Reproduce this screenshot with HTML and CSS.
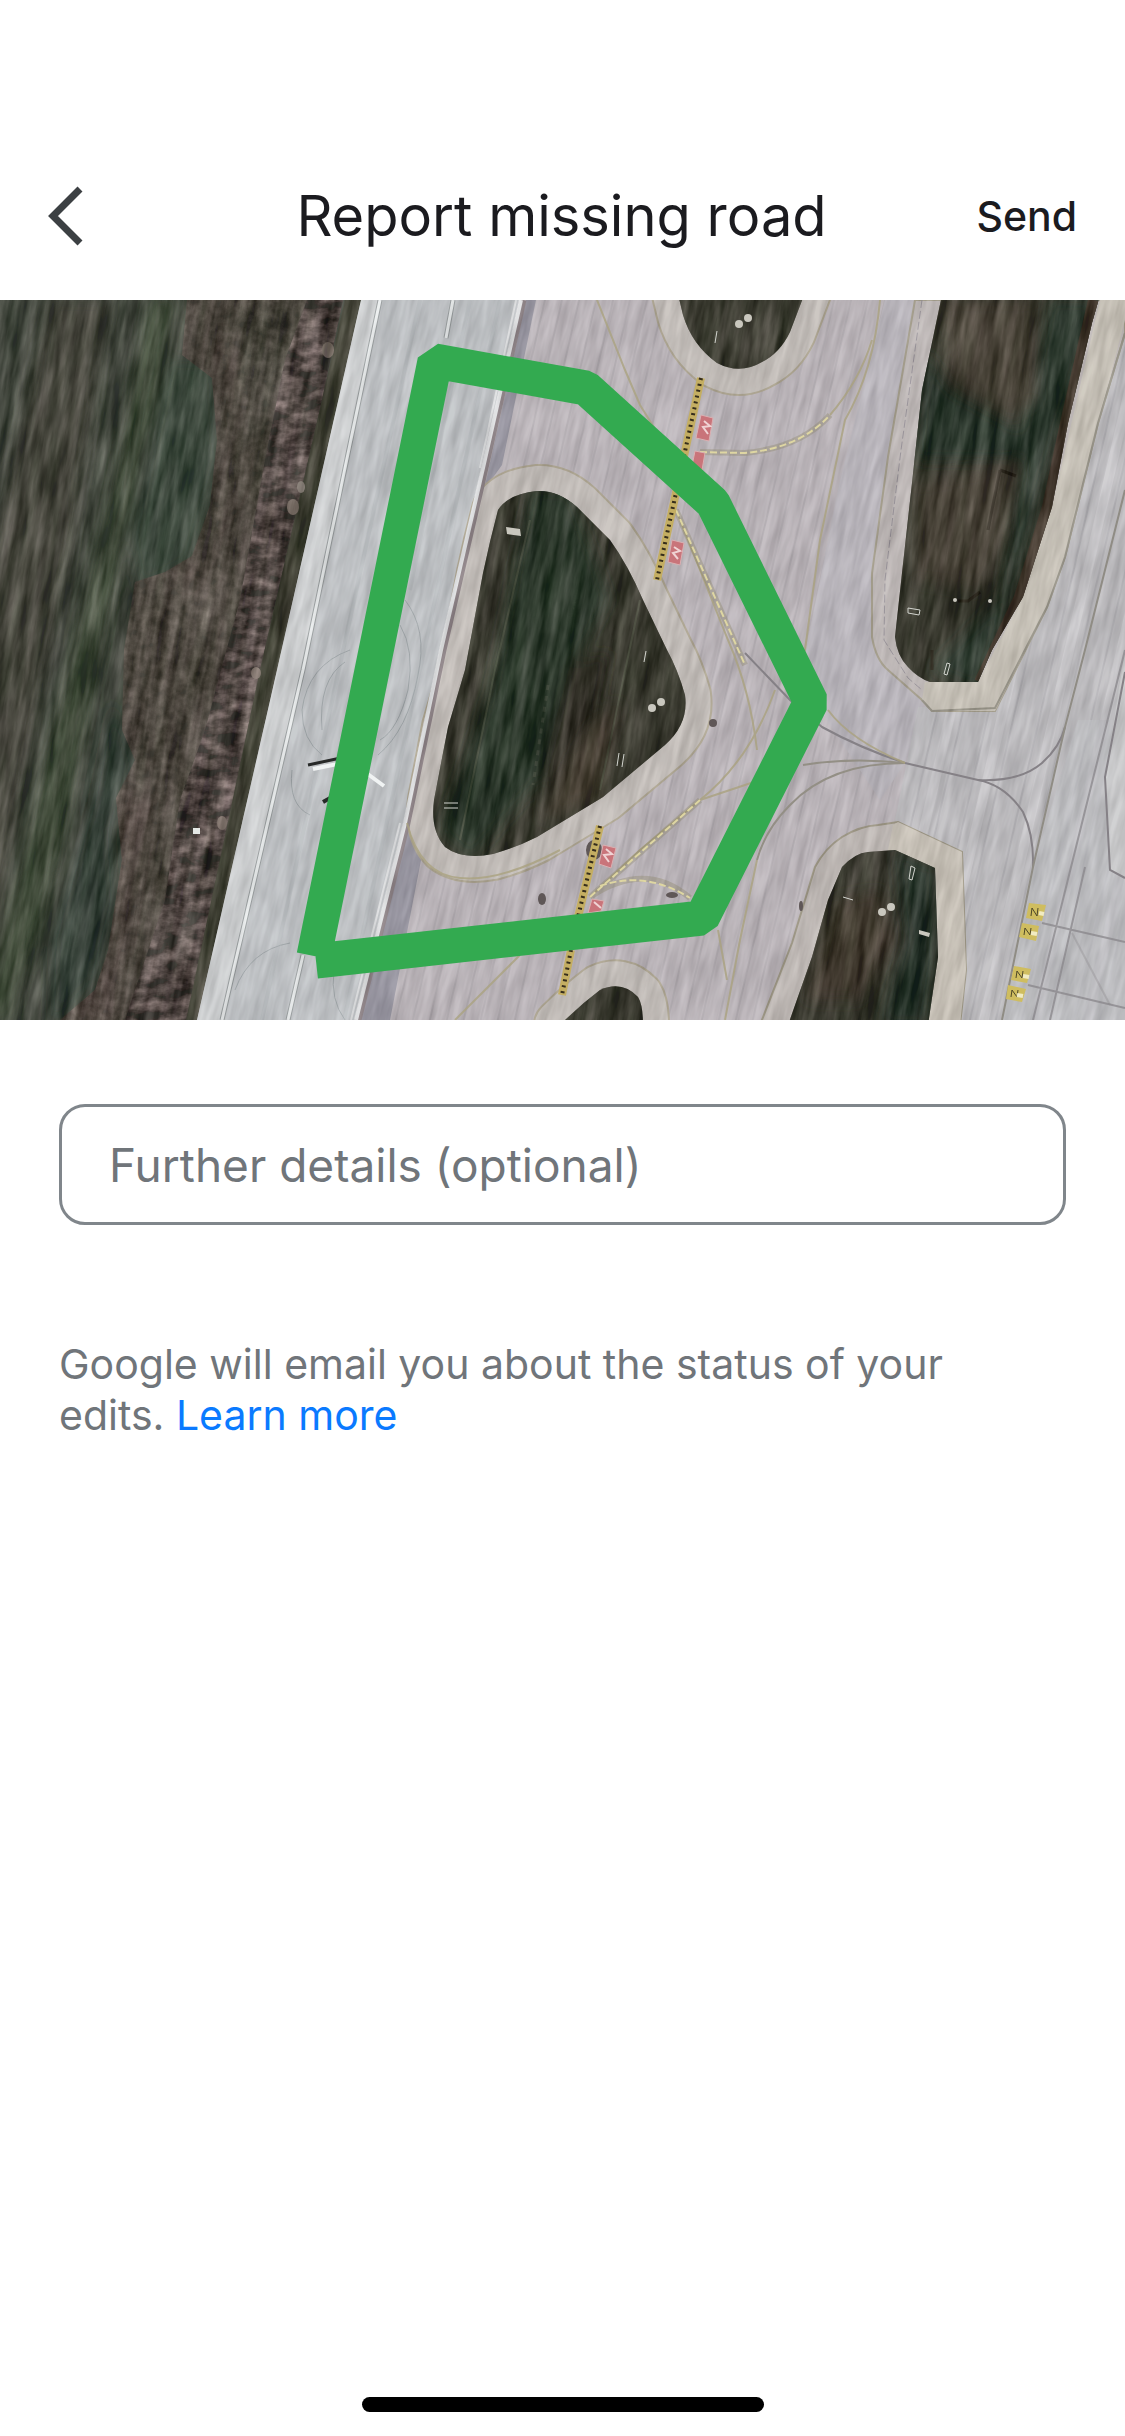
FILE: index.html
```
<!DOCTYPE html>
<html lang="en">

<head>
    <meta charset="UTF-8">
    <meta name="viewport" content="width=device-width, initial-scale=1">
    <title>Report missing road</title>
    <link rel="stylesheet" href="styles.css">
</head>

<body>
    <header class="topbar">
        <button class="back" type="button" aria-label="Back">
            <svg width="40" height="60" viewBox="0 0 40 60"><path d="M34 3 L7 30 L34 57" /></svg>
        </button>
        <h1>Report missing road</h1>
        <button class="send" type="submit" form="reportForm">Send</button>
    </header>

    <svg class="map" viewBox="0 0 1125 720" role="img" aria-label="Satellite map with the drawn road">
        <defs>
            <filter id="grassNoise" x="0" y="0" width="100%" height="100%" color-interpolation-filters="sRGB">
                <feTurbulence type="fractalNoise" baseFrequency="0.1 0.015" numOctaves="4" seed="4" />
                <feColorMatrix values="0.9 0 0 0 -0.22  0.85 0.05 0 0 -0.22  0.85 0 0 0 -0.24  0 0 0 0 0.45" />
            </filter>
            <filter id="treeNoise" x="0" y="0" width="100%" height="100%" color-interpolation-filters="sRGB">
                <feTurbulence type="fractalNoise" baseFrequency="0.05 0.09" numOctaves="4" seed="9" />
                <feColorMatrix values="1.9 0 0 0 -0.64  1.7 0 0 0 -0.63  1.7 0 0 0 -0.62  0 0 0 0 0.75" />
            </filter>
            <filter id="scrubNoise" x="0" y="0" width="100%" height="100%" color-interpolation-filters="sRGB">
                <feTurbulence type="fractalNoise" baseFrequency="0.1" numOctaves="4" seed="5" />
                <feColorMatrix values="1.2 0 0 0 -0.3  1.1 0 0 0 -0.31  1.1 0 0 0 -0.33  0 0 0 0 0.4" />
            </filter>
            <filter id="paveNoise" x="0" y="0" width="100%" height="100%" color-interpolation-filters="sRGB">
                <feTurbulence type="fractalNoise" baseFrequency="0.12 0.02" numOctaves="3" seed="2" />
                <feColorMatrix values="1 0 0 0 0.24  1 0 0 0 0.23  1 0 0 0 0.24  0 0 0 0 0.25" />
            </filter>
            <filter id="soft" x="-20%" y="-20%" width="140%" height="140%"><feGaussianBlur stdDeviation="7" /></filter>
            <pattern id="slabs" width="17" height="90" patternUnits="userSpaceOnUse" patternTransform="skewX(-13)">
                <path d="M1 0 V90" stroke="#8f8a91" stroke-width="1" opacity=".6" />
            </pattern>
            <pattern id="lanes" width="52" height="90" patternUnits="userSpaceOnUse" patternTransform="skewX(-13)">
                <path d="M6 0 V90" stroke="#cdcccf" stroke-width="10" opacity=".6" />
                <path d="M18 0 V90 M44 0 V90" stroke="#939297" stroke-width="1" opacity=".7" />
            </pattern>
            <path id="midIsland" d="M537 191 Q508 194 498 210 Q490 240 483 273 L465 370 L448 427 L434 500 Q430 530 445 547 Q462 560 493 554 Q515 548 537 537 L603 497 L665 445 Q689 424 685 395 Q678 370 667 350 L643 300 Q628 265 610 240 L577 207 Q558 190 537 191 Z" />
            <path id="topIsland" d="M677 -10 L683 15 Q692 45 717 63 Q740 75 762 62 Q780 53 790 32 L806 -10 Z" />
            <path id="lowIsland" d="M560 725 Q580 705 600 690 Q622 680 638 697 Q643 705 643 725 Z" />
            <path id="eastIsland" d="M942 -5 L922 90 L912 183 L902 273 L895 337 Q897 356 908 367 Q918 378 930 382 H978 L992 350 L1023 297 L1052 207 L1068 123 L1092 23 L1100 -5 Z" />
            <path id="southIsland" d="M788 725 L812 657 L828 600 L842 567 Q855 553 868 552 L895 550 L935 568 L938 657 L928 725 Z" />
            <clipPath id="grassClip">
                <path d="M0 0 H361 L277 370 L197 720 H0 Z" />
                <use href="#midIsland" />
                <use href="#topIsland" />
                <use href="#lowIsland" />
                <use href="#eastIsland" />
                <use href="#southIsland" />
            </clipPath>
            <clipPath id="scrubClip"><path d="M187 0 L182 55 L212 78 L217 140 L210 205 L192 256 L165 272 L135 282 L124 350 L122 430 L135 460 L116 498 L122 560 L108 650 L95 690 L60 720 H188 L260 370 L343 0 Z" /></clipPath>
            <clipPath id="treeClip"><path d="M307 0 L343 0 L322 100 L260 370 L188 720 L125 720 L165 600 L180 500 L205 430 L240 300 L265 160 L285 60 Z" /></clipPath>
            <clipPath id="midClip"><use href="#midIsland" /></clipPath>
            <clipPath id="eastClip"><use href="#eastIsland" /></clipPath>
            <clipPath id="southClip"><use href="#southIsland" /></clipPath>
        </defs>

        <!-- pavement -->
        <rect width="1125" height="720" fill="#b8b1b6" />
        <rect width="1125" height="720" fill="url(#slabs)" />
        <path d="M885 0 L840 180 L800 380 L880 500 L905 463 L925 400 L880 330 L888 157 L915 0 Z" fill="#b6b2b9" />
        <path d="M1125 20 L1098 123 L1065 257 L1047 307 L995 408 L918 407 L895 520 L960 552 L966 670 L958 720 H1125 Z" fill="#b9b8bb" />
        <path d="M1125 20 L1098 123 L1065 257 L1047 307 L995 408 L918 407 L895 520 L960 552 L966 670 L958 720 H1125 Z" fill="url(#lanes)" />
        <path d="M1078 420 L1033 567 L1002 720 H1125 V420 Z" fill="#bbbdc0" opacity=".8" />
        <path d="M1125 350 L1105 477 L1110 570 L1125 578 Z" fill="#c6c7c8" />

        <!-- field on the left -->
        <path d="M0 0 H361 L277 370 L197 720 H0 Z" fill="#2f3a30" />
        <g filter="url(#soft)" clip-path="url(#grassClip)">
            <path d="M50 0 H110 L70 250 L20 500 L-20 720 V300 Z" fill="#38392f" />
            <path d="M150 0 H178 L110 300 L60 560 L10 720 H-20 L40 480 L110 200 Z" fill="#2b4228" />
            <path d="M170 60 H215 L220 160 L190 260 L140 290 L130 240 Z" fill="#213c2f" />
            <path d="M112 400 L135 465 L112 530 L115 600 L95 680 L50 730 L52 640 L92 500 Z" fill="#192f25" />
        </g>
        <g clip-path="url(#scrubClip)">
            <rect width="361" height="720" fill="#463c34" />
            <g filter="url(#soft)">
                <path d="M240 10 L300 0 L270 130 L240 150 Z" fill="#3a3a2e" />
                <path d="M212 50 L235 100 L240 150 L210 250 L170 275 L190 285 L240 180 L240 90 L222 30 Z" fill="#553e3a" />
                <path d="M120 490 L150 500 L130 600 L110 720 L60 720 L110 660 Z" fill="#533938" />
            </g>
            <rect width="361" height="720" filter="url(#scrubNoise)" />
        </g>
        <g clip-path="url(#treeClip)">
            <rect width="361" height="720" fill="#4b3b3d" />
            <rect width="361" height="720" filter="url(#treeNoise)" />
        </g>
        <path d="M345 0 H361 L277 370 L197 720 H186 L260 370 Z" fill="#2f3020" />
        <g fill="#a58d86">
            <ellipse cx="328" cy="50" rx="6" ry="8" />
            <ellipse cx="301" cy="187" rx="4" ry="6" fill="#baa8a3" />
            <ellipse cx="293" cy="207" rx="6" ry="8" />
            <ellipse cx="256" cy="373" rx="5" ry="6" />
            <ellipse cx="222" cy="523" rx="5" ry="7" />
        </g>

        <!-- runway -->
        <path d="M361 0 H523 L480 190 L443 350 L407 523 L358 720 H197 L277 370 Z" fill="#bcc0c3" />
        <path d="M361 0 H379 L303 370 L222 720 H197 L277 370 Z" fill="#cfd2d3" />
        <g fill="none" stroke="#a2a8ab" stroke-width="4" opacity=".35">
            <path d="M420 0 L262 720 M470 0 L438 150 L410 290 M500 0 L344 720" />
        </g>
        <g fill="none" stroke="#979fa2" stroke-width="1">
            <path d="M350 350 Q308 365 302 410 Q302 440 322 455 M345 362 Q318 380 322 430 M292 470 Q288 505 310 515 M405 300 Q428 330 418 375 Q408 430 378 455 M400 325 Q415 350 408 390 Q398 430 380 440 M235 690 Q250 650 290 643 M334 670 Q330 700 345 720" />
        </g>
        <path d="M380 0 L303 370 L222 720 M453 0 L446 38 M303 655 L288 720" fill="none" stroke="#8d9394" stroke-width="5" />
        <path d="M380 0 L303 370 L222 720 M453 0 L446 38 M303 655 L288 720" fill="none" stroke="#e8ecec" stroke-width="3" />
        <path d="M526 0 H536 L502 165 L484 190 Z M407 523 L422 555 L390 720 H360 Z" fill="#8b8996" />

        <!-- light shoulders round the grass -->
        <g fill="none" stroke-linejoin="round">
            <g stroke="#a59c84" stroke-width="54">
                <use href="#midIsland" /><use href="#topIsland" /><use href="#lowIsland" />
            </g>
            <g stroke="#c0bab4" stroke-width="50">
                <use href="#midIsland" /><use href="#topIsland" /><use href="#lowIsland" />
            </g>
        </g>
        <path d="M523 0 L480 190 L443 350 L407 523 L358 720" fill="none" stroke="#807478" stroke-width="7" />
        <path d="M521 0 L478 190 L441 350 L405 523 L356 720" fill="none" stroke="#e0e2e3" stroke-width="4" />
        <path d="M516 0 L480 168 M400 523 L351 720" fill="none" stroke="#e0e2e3" stroke-width="2" />
        <path d="M915 0 L888 157 L872 273 L872 337 Q876 360 888 370 L922 400 L932 411 H995 L1047 307 L1065 257 L1098 123 L1125 33 V0 Z" fill="#bcb5b3" stroke="#9d9680" stroke-width="2" />
        <path d="M1100 0 L1052 207 L1023 297 L978 382 H925 L922 400 L932 411 H995 L1047 307 L1065 257 L1098 123 L1125 20 V0 Z" fill="#c6c0b3" />
        <path d="M922 400 L932 411 L995 408 L1047 307 L1065 257 L1098 123 L1125 33" fill="none" stroke="#8c887a" stroke-width="2" />
        <path d="M760 725 L792 643 L815 567 Q825 548 842 537 Q860 526 878 525 L898 522 L962 552 L966 670 L960 725 Z" fill="#bcb5b0" stroke="#938c76" stroke-width="2" />
        <path d="M893 525 L898 522 L962 552 L966 670 L960 725 H928 L938 657 L935 568 L888 550 Z" fill="#c6bfb2" />
        <path d="M922 0 L901 150 L885 280 L884 340 L908 378 L922 390" fill="none" stroke="#8f8990" stroke-width="1" stroke-dasharray="8 3" />
        <g transform="skewX(-13)">
            <rect width="1300" height="720" filter="url(#paveNoise)" opacity=".8" />
        </g>

        <!-- grass islands -->
        <g fill="#3a3a31">
            <use href="#midIsland" /><use href="#topIsland" /><use href="#lowIsland" /><use href="#eastIsland" /><use href="#southIsland" />
        </g>
        <g clip-path="url(#midClip)">
            <g filter="url(#soft)">
                <path d="M530 190 H570 L610 300 L570 370 L540 480 L470 560 L440 530 L490 390 Z" fill="#22372b" />
                <path d="M570 365 L610 350 L590 450 L560 490 L540 480 Z" fill="#28231d" />
                <path d="M590 430 L620 400 L600 500 L540 520 Z" fill="#57493e" />
            </g>
            <path d="M530 220 L495 370 L460 540 M640 300 L600 490" fill="none" stroke="#68715c" stroke-width="2" opacity=".6" />
            <path d="M548 385 L533 485" fill="none" stroke="#747969" stroke-width="3" stroke-dasharray="5 6" opacity=".4" />
        </g>
        <g clip-path="url(#eastClip)">
            <path d="M925 50 L950 90 L1020 130 L1050 0 H1100 L1050 160 L1010 300 L980 390 L930 370 L1000 300 L1020 160 L915 160 Z" fill="#20392e" filter="url(#soft)" />
            <path d="M940 0 H1035 V100 L1010 115 L950 80 Z M915 185 L1020 160 L1005 240 L980 290 L915 280 Z" fill="#51473c" filter="url(#soft)" />
            <path d="M1094 0 L1066 123 L1048 207 L1020 297 L980 382" fill="none" stroke="#4c3930" stroke-width="12" />
            <path d="M1000 170 L988 230 M1000 170 L1016 176 M958 301 H968 L980 292 M932 350 V370" fill="none" stroke="#282018" stroke-width="3" />
        </g>
        <g clip-path="url(#southClip)">
            <path d="M895 550 L935 568 V657 L925 725 H880 L905 640 Z" fill="#1f332b" filter="url(#soft)" />
            <path d="M835 600 L880 590 L895 640 L860 700 L805 700 Z" fill="#45382f" filter="url(#soft)" />
        </g>
        <g clip-path="url(#grassClip)">
            <g transform="skewX(-9)">
                <rect width="1300" height="720" filter="url(#grassNoise)" />
            </g>
        </g>

        <!-- small fixtures on the grass -->
        <rect x="193" y="528" width="7" height="6" fill="#e4e8e5" />
        <g fill="none" stroke="#d3d5cf" stroke-width="1">
            <path d="M717 31 L715 43 M646 351 L644 362 M619 453 L617 466 M624 454 L622 467 M444 503 H458 M444 508 H458" />
            <path d="M947 363 L950 364 L947 375 L944 374 Z M908 308 L920 310 L919 315 L908 313 Z M911 566 L915 568 L912 580 L909 579 Z M843 597 L853 600" />
        </g>
        <g fill="#c9c7be">
            <path d="M506 227 L520 229 L521 236 L507 234 Z M919 630 L930 633 L929 637 L919 634 Z" />
            <circle cx="661" cy="402" r="4" /><circle cx="652" cy="408" r="4" />
            <circle cx="739" cy="24" r="4" /><circle cx="748" cy="18" r="4" />
            <circle cx="891" cy="607" r="4" /><circle cx="882" cy="612" r="4" />
            <circle cx="955" cy="300" r="2" /><circle cx="990" cy="301" r="2" />
        </g>
        <g fill="#5f5757">
            <circle cx="713" cy="423" r="4" /><ellipse cx="542" cy="599" rx="4" ry="6" /><ellipse cx="672" cy="595" rx="6" ry="3" />
            <ellipse cx="801" cy="606" rx="2" ry="5" /><ellipse cx="594" cy="550" rx="8" ry="10" />
        </g>

        <!-- taxiway centre lines -->
        <g fill="none" stroke="#858186" stroke-width="2">
            <path d="M745 353 L790 400 L822 427 Q860 448 905 463 L978 480 Q1005 485 1023 512 Q1034 535 1033 567" />
            <path d="M978 480 Q1020 482 1042 463 Q1060 447 1065 427" />
            <path d="M1125 190 L1085 350 L1065 427 L1033 567 L1002 720" stroke="#8f8c84" />
            <path d="M1125 350 L1033 720 M1085 567 L1050 720 M1042 623 L1125 642 M1028 685 L1125 708" opacity=".7" />
            <path d="M1125 372 L1105 477 L1110 570 L1125 578" />
            <path d="M1072 633 L1110 705" opacity=".3" />
            <path d="M803 465 Q850 457 905 463 M905 463 Q830 463 790 505 Q765 530 757 560" stroke="#938f85" />
        </g>
        <g fill="none" stroke="#aaa27f" stroke-width="2" opacity=".8">
            <path d="M597 0 L625 70 L640 105 L668 150 M676 210 L700 270 L728 340 Q750 390 757 450" />
            <path d="M590 597 L640 550 L700 500 Q750 460 775 390 M700 500 L760 480 L790 465" />
            <path d="M880 0 Q874 70 845 120 L820 240 L805 350 L785 385 M828 410 Q850 440 905 463 M830 115 Q860 80 872 40" />
            <path d="M757 560 L740 640 L725 720 M718 630 L727 680 M520 655 L495 680 L455 720 M407 523 Q420 575 460 578 Q500 582 560 550" />
        </g>
        <g fill="none" stroke="#827a55" stroke-width="6" opacity=".3">
            <path d="M700 152 L745 153 Q800 148 830 115 M676 210 L745 365 M590 597 L700 500 M590 597 Q645 560 690 598" />
        </g>
        <g fill="none" stroke="#ded6a2" stroke-width="2" stroke-dasharray="7 3">
            <path d="M700 152 L745 153 Q800 148 830 115 M676 210 L745 365 M590 597 L700 500 M600 586 Q645 570 690 598" />
        </g>
        <g fill="none" stroke="#c4ae62" stroke-width="8">
            <path d="M701 78 L657 280 M600 526 L578 617 M571 650 L562 695" />
        </g>
        <g fill="none" stroke="#352d1c" stroke-width="4" stroke-dasharray="2 4">
            <path d="M701 78 L657 280 M600 526 L578 617 M571 650 L562 695" />
        </g>

        <!-- painted signs -->
        <g fill="#c9747a" stroke="#dab0b2" stroke-width="1">
            <path d="M701 115 L713 118 L709 141 L696 138 Z M695 151 L705 153 L702 170 L692 166 Z M672 240 L684 243 L680 265 L668 262 Z M603 545 L616 548 L611 568 L599 564 Z M592 599 L604 601 L601 611 L588 613 Z" />
        </g>
        <path d="M704 121 L710 126 L703 127 L708 134 M674 247 L680 251 L673 253 L678 259 M606 549 L612 554 L604 555 L609 562 M594 602 L601 608" fill="none" stroke="#f0d3d4" stroke-width="2" />
        <g fill="#cfbd5f">
            <path d="M1029 603 L1046 605 L1042 621 L1026 618 Z M1022 623 L1039 626 L1036 641 L1019 637 Z M1014 666 L1031 669 L1027 683 L1011 680 Z M1008 685 L1026 689 L1022 702 L1006 699 Z" />
        </g>
        <path d="M1031 616 L1032 608 L1037 616 L1038 608 M1024 635 L1025 628 L1030 635 L1031 628 M1016 678 L1017 671 L1022 678 L1023 671 M1011 697 L1012 690 L1017 697 L1018 690" fill="none" stroke="#4e4828" stroke-width="1" />
        <path d="M1039 613 L1044 614 M1031 633 L1037 634 M1023 676 L1029 677 M1017 695 L1023 696" stroke="#f1ebc2" stroke-width="4" />

        <!-- plane on the runway -->
        <path d="M308 465 L350 456" stroke="#272928" stroke-width="3" />
        <path d="M313 469 L352 461 M365 472 L384 486" stroke="#f0f3f3" stroke-width="4" />
        <path d="M323 502 L332 497" stroke="#272928" stroke-width="4" />

        <!-- road drawn by the user -->
        <polyline class="road" points="314,656 435,61 586,88 713,203 811,402 702,618 316,661" />
    </svg>

    <main class="content">
        <form id="reportForm">
            <input class="details" type="text" name="details" aria-label="Further details (optional)" placeholder="Further details (optional)">
        </form>
        <p class="notice">Google will email you about the status of your edits. <a href="#">Learn more</a></p>
    </main>

    <div class="home-bar"></div>
</body>

</html>
```
FILE: styles.css
```
* {
    margin: 0;
    padding: 0;
    box-sizing: border-box;
}

body {
    font-family: Inter, "Liberation Sans", sans-serif;
    background-color: #fff;
    color: #1b1b1f;
    display: flex;
    flex-direction: column;
    min-height: 100vh;
}

button {
    background: none;
    border: none;
    font-family: inherit;
    color: inherit;
    cursor: pointer;
}

.topbar {
    display: grid;
    grid-template-columns: 1fr auto 1fr;
    align-items: center;
    padding: 132px 48px 0 46px;
    height: 300px;
}

.topbar h1 {
    font-size: 56px;
    font-weight: 400;
    line-height: 72px;
}

.back {
    justify-self: start;
    display: flex;
}

.back path {
    fill: none;
    stroke: #3c4043;
    stroke-width: 7;
}

.send {
    justify-self: end;
    font-size: 41px;
    font-weight: 500;
    line-height: 52px;
}

/* Map preview */
.map {
    display: block;
    width: 100%;
    height: auto;
}

.road {
    fill: none;
    stroke: #33aa50;
    stroke-width: 35;
    stroke-linejoin: bevel;
}

.content {
    padding: 84px 59px 0;
}

.details {
    display: block;
    width: 100%;
    height: 121px;
    padding: 0 47px;
    border: 3px solid #80868b;
    border-radius: 26px;
    font-family: inherit;
    font-size: 46px;
    color: #1b1b1f;
}

.details::placeholder {
    color: #70757a;
    opacity: 1;
}

.notice {
    margin-top: 114px;
    padding-right: 64px;
    font-size: 41px;
    line-height: 51px;
    color: #70757a;
}

.notice a {
    color: #0a7aff;
    text-decoration: none;
}

/* Home indicator */
.home-bar {
    width: 402px;
    height: 15px;
    margin: auto auto 24px;
    border-radius: 8px;
    background-color: #000;
}
```
